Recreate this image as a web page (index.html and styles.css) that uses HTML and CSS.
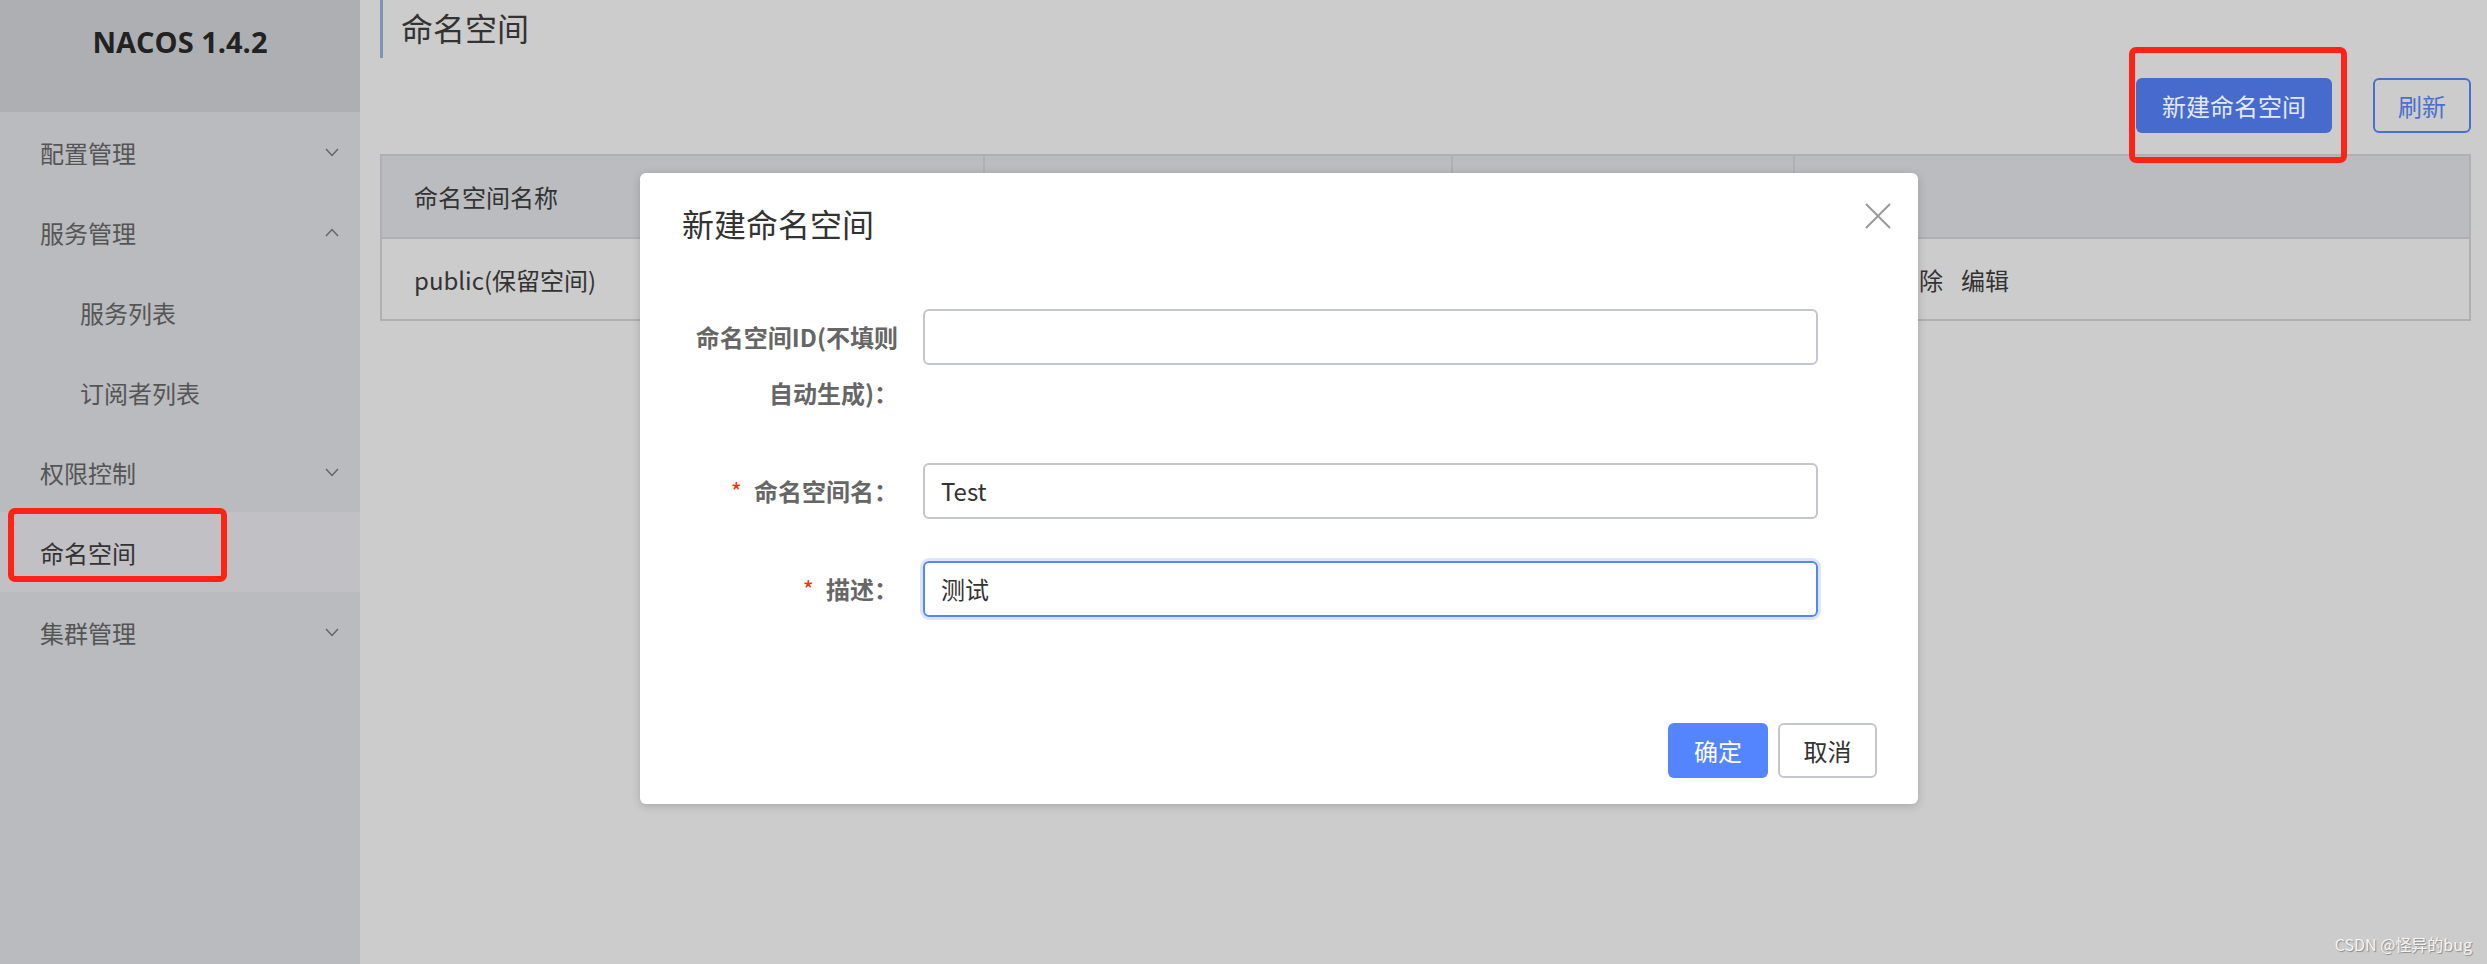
FILE: index.html
```html
<!DOCTYPE html>
<html lang="zh">
<head>
<meta charset="utf-8">
<title>NACOS 命名空间</title>
<link rel="stylesheet" href="styles.css">
</head>
<body>
<div class="app">
  <aside class="sidebar">
    <div class="brand">NACOS 1.4.2</div>
    <nav class="menu">
      <div class="menu-item">
        <span>配置管理</span>
        <svg class="chev" viewBox="0 0 14 9" width="14" height="9"><path d="M1 1L7 7.5L13 1"/></svg>
      </div>
      <div class="menu-item">
        <span>服务管理</span>
        <svg class="chev" viewBox="0 0 14 9" width="14" height="9"><path d="M1 8L7 1.5L13 8"/></svg>
      </div>
      <div class="menu-item sub"><span>服务列表</span></div>
      <div class="menu-item sub"><span>订阅者列表</span></div>
      <div class="menu-item">
        <span>权限控制</span>
        <svg class="chev" viewBox="0 0 14 9" width="14" height="9"><path d="M1 1L7 7.5L13 1"/></svg>
      </div>
      <div class="menu-item active">
        <span>命名空间</span>
        <div class="mark mark-side"></div>
      </div>
      <div class="menu-item">
        <span>集群管理</span>
        <svg class="chev" viewBox="0 0 14 9" width="14" height="9"><path d="M1 1L7 7.5L13 1"/></svg>
      </div>
    </nav>
  </aside>

  <main class="main">
    <h1 class="page-title">命名空间</h1>
    <div class="toolbar">
      <button class="btn btn-primary-dim">新建命名空间<span class="mark mark-btn"></span></button>
      <button class="btn btn-outline">刷新</button>
    </div>
    <div class="table">
      <div class="thead">
        <div class="th">命名空间名称</div>
        <div class="th">命名空间ID</div>
        <div class="th">配置数</div>
        <div class="th last">操作</div>
      </div>
      <div class="trow">
        <div class="td">public(保留空间)</div>
        <div class="td"></div>
        <div class="td">0</div>
        <div class="td ops"><span>详情</span><span>删除</span><span>编辑</span></div>
      </div>
    </div>
  </main>
</div>

<div class="dialog">
  <div class="dialog-head">
    <div class="dialog-title">新建命名空间</div>
    <svg class="close" viewBox="0 0 26 26" width="26" height="26"><path d="M1 1L25 25M25 1L1 25"/></svg>
  </div>
  <div class="dialog-body">
    <div class="form-row">
      <label class="form-label"><span class="label-text">命名空间ID(不填则自动生成)：</span></label>
      <div class="input"></div>
    </div>
    <div class="form-row">
      <label class="form-label"><span class="req">*</span>命名空间名：</label>
      <div class="input">Test</div>
    </div>
    <div class="form-row">
      <label class="form-label"><span class="req">*</span>描述：</label>
      <div class="input focused">测试</div>
    </div>
  </div>
  <div class="dialog-foot">
    <button class="btn btn-primary">确定</button>
    <button class="btn btn-normal">取消</button>
  </div>
</div>

<div class="watermark">CSDN @怪异的bug</div>
</body>
</html>
```

FILE: styles.css
```css
* { box-sizing: border-box; }
html, body {
  margin: 0;
  padding: 0;
  width: 2487px;
  height: 964px;
  overflow: hidden;
}
body {
  font-family: "Noto Sans CJK SC", "Noto Sans", sans-serif;
  background: #cccccc;
  color: #333;
}
.app {
  display: flex;
  height: 964px;
}

/* Sidebar */
.sidebar {
  width: 360px;
  flex: none;
  background: #b9bbbe;
  display: flex;
  flex-direction: column;
}
.brand {
  height: 112px;
  background: #adafb3;
  font-family: "Open Sans", "Liberation Sans", sans-serif;
  font-weight: 700;
  font-size: 29px;
  color: #222;
  text-align: center;
  padding-top: 22px;
  line-height: 40px;
}
.menu {
  display: flex;
  flex-direction: column;
}
.menu-item {
  position: relative;
  height: 80px;
  display: flex;
  align-items: center;
  justify-content: space-between;
  padding: 0 21px 0 40px;
  font-size: 24px;
  color: #555;
}
.menu-item.sub { padding-left: 80px; }
.menu-item.active {
  background: #c1c0c4;
  color: #333;
}
.chev {
  fill: none;
  stroke: #666;
  stroke-width: 1.5;
  margin-top: 1px;
}

/* annotation boxes */
.mark {
  position: absolute;
  border: 6px solid #ff2216;
  border-radius: 7px;
  pointer-events: none;
}
.mark-side {
  left: 8px;
  top: -4px;
  width: 219px;
  height: 74px;
}
.mark-btn {
  left: -7px;
  top: -31px;
  width: 218px;
  height: 116px;
}

/* Main */
.main {
  flex: 1;
  padding: 0 16px 0 20px;
  display: flex;
  flex-direction: column;
}
.page-title {
  margin: 0;
  height: 58px;
  border-left: 3px solid #7b95b5;
  padding-left: 18px;
  font-size: 32px;
  font-weight: 400;
  line-height: 54px;
  color: #333;
}
.toolbar {
  margin-top: 20px;
  display: flex;
  justify-content: flex-end;
  gap: 41px;
}
.btn {
  font-family: "Noto Sans CJK SC", sans-serif;
  font-size: 24px;
  height: 55px;
  border-radius: 6px;
  padding: 0;
  cursor: pointer;
}
.btn-primary-dim {
  position: relative;
  width: 196px;
  background: #466bcc;
  border: none;
  color: #e2e8f6;
}
.btn-outline {
  width: 98px;
  background: transparent;
  border: 2px solid #4a6fce;
  color: #4a6fce;
}

.table {
  margin-top: 21px;
  border: 2px solid #b0b0b4;
}
.thead, .trow {
  display: grid;
  grid-template-columns: 603px 468px 342px 1fr;
}
.thead {
  height: 83px;
  background: #bbbcc0;
  border-bottom: 2px solid #b0b0b4;
}
.th {
  border-right: 2px solid #b0b0b4;
  display: flex;
  align-items: center;
  padding-left: 32px;
  font-size: 24px;
  color: #333;
}
.th.last { border-right: none; }
.trow { height: 80px; }
.td {
  display: flex;
  align-items: center;
  padding-left: 32px;
  font-size: 24px;
  color: #333;
}
.td.ops { gap: 18px; padding-left: 34px; }

/* Dialog */
.dialog {
  position: absolute;
  left: 640px;
  top: 173px;
  width: 1278px;
  height: 631px;
  background: #fff;
  border-radius: 6px;
  box-shadow: 0 2px 10px rgba(0, 0, 0, 0.18);
  display: flex;
  flex-direction: column;
}
.dialog-head {
  display: flex;
  justify-content: space-between;
  align-items: flex-start;
  padding: 30px 27px 0 42px;
}
.dialog-title {
  font-size: 32px;
  line-height: 40px;
  color: #333;
}
.close {
  fill: none;
  stroke: #999;
  stroke-width: 2;
}
.dialog-body {
  padding-top: 66px;
  display: flex;
  flex-direction: column;
  gap: 42px;
}
.form-row {
  display: grid;
  grid-template-columns: 258px 895px;
  column-gap: 25px;
  align-items: start;
}
.form-label {
  text-align: right;
  font-size: 24px;
  font-weight: 700;
  color: #666;
  line-height: 56px;
  padding-left: 46px;
}
.req {
  color: #ff3000;
  font-weight: 400;
  margin-right: 12px;
}
.input {
  height: 56px;
  border: 2px solid #c4c6cf;
  border-radius: 6px;
  padding: 0 16px;
  font-size: 24px;
  line-height: 52px;
  color: #333;
}
.input.focused {
  border-color: #5584ff;
  box-shadow: 0 0 0 3px #dbe5fd;
}
.dialog-foot {
  margin-top: auto;
  display: flex;
  justify-content: flex-end;
  gap: 10px;
  padding: 0 41px 26px 0;
}
.btn-primary {
  width: 100px;
  background: #5584ff;
  border: none;
  color: #fff;
}
.btn-normal {
  width: 99px;
  background: #fff;
  border: 2px solid #c4c6cf;
  color: #333;
}

.watermark {
  position: absolute;
  right: 15px;
  bottom: 8px;
  font-family: "Noto Sans CJK SC", sans-serif;
  font-size: 16px;
  color: #f4f4f4;
  text-shadow: 1px 1px 1px #8a8a8a;
}
```
